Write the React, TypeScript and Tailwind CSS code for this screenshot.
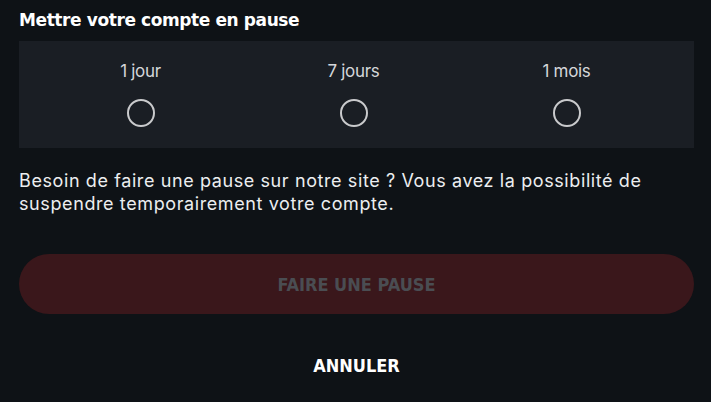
import { useState } from "react";

const options = ["1 jour", "7 jours", "1 mois"];

export default function App() {
  const [selected, setSelected] = useState<number | null>(null);

  return (
    <div className="w-[711px] h-[402px] bg-[#0e1216] text-white font-['Inter','Noto_Sans',sans-serif] overflow-hidden">
      <div className="w-[675px] ml-[19px] pt-[9px]">
        <h2 className="text-[17px] leading-[22px] font-bold tracking-[-0.4px] font-['DejaVu_Sans',sans-serif]">
          Mettre votre compte en pause
        </h2>

        <div className="mt-[10px] h-[107px] bg-[#1a1e24] grid grid-cols-3 pl-[15px] pr-[21px]">
          {options.map((label, i) => (
            <label
              key={label}
              className="flex flex-col items-center pt-[20px] cursor-pointer"
            >
              <span className="text-[17px] leading-[20px] text-[#d4d6d9] tracking-[-0.3px]">
                {label}
              </span>
              <button
                type="button"
                onClick={() => setSelected(i)}
                className="mt-[18px] w-[28px] h-[28px] rounded-full border-2 border-[#c9cacc] flex items-center justify-center"
              >
                {selected === i && (
                  <span className="w-[14px] h-[14px] rounded-full bg-[#c9cacc]" />
                )}
              </button>
            </label>
          ))}
        </div>

        <p className="mt-[21px] text-[18px] leading-[23px] text-[#eceef0] tracking-[0.6px]">
          Besoin de faire une pause sur notre site ? Vous avez la possibilité de
          suspendre temporairement votre compte.
        </p>

        <button
          type="button"
          disabled={selected === null}
          className="mt-[39px] w-full h-[60px] rounded-full bg-[#3a171b] text-[#4a4d52] text-[18px] font-bold uppercase font-['Liberation_Sans_Narrow','DejaVu_Sans_Condensed',sans-serif]"
        >
          Faire une pause
        </button>

        <button
          type="button"
          className="block mx-auto mt-[38px] text-[18px] font-bold uppercase text-white font-['Liberation_Sans_Narrow','DejaVu_Sans_Condensed',sans-serif]"
        >
          Annuler
        </button>
      </div>
    </div>
  );
}
